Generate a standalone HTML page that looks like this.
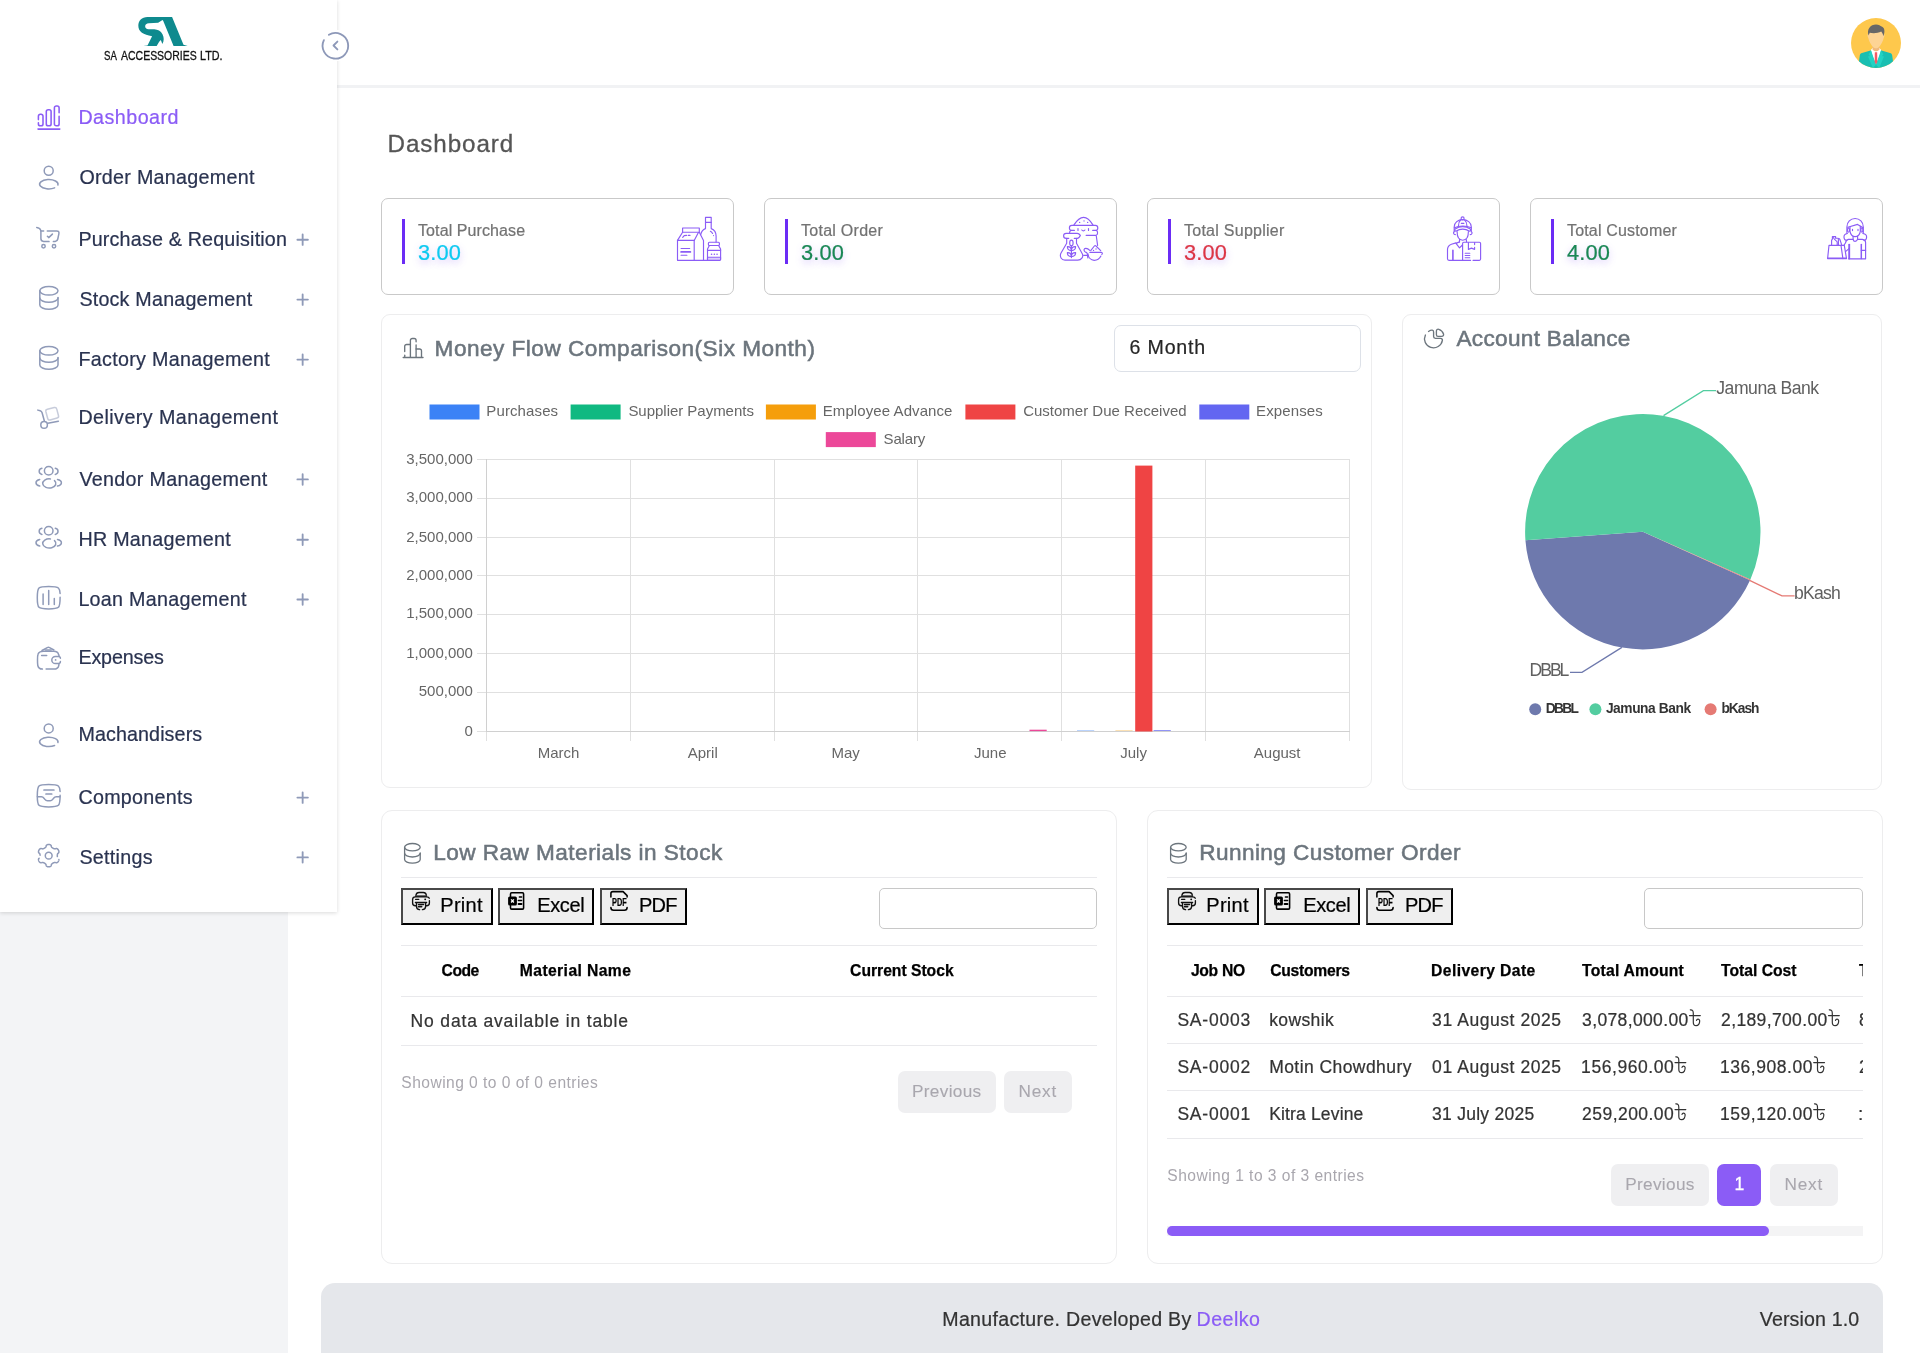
<!DOCTYPE html>
<html><head><meta charset="utf-8"><title>Dashboard</title><style>
*{box-sizing:border-box}
html,body{margin:0;padding:0}
html{width:1920px;height:1353px;overflow:hidden}
body{width:1920px;height:1353px;overflow:hidden;background:#f3f4f6;font-family:"Liberation Sans",sans-serif;position:relative}
#w{position:absolute;left:0;top:0;width:1920px;height:1353px;will-change:transform;overflow:hidden}
.abs{position:absolute}
.t{position:absolute;white-space:pre;line-height:1;display:block}
.n{-webkit-text-stroke-width:.22px}
#main{position:absolute;left:288px;top:0;width:1632px;height:1353px;background:#fff}
#sidebar{position:absolute;left:0;top:0;width:337px;height:912px;background:#fff;box-shadow:0 1px 4px rgba(0,0,0,.15)}
#toggle{position:absolute;left:320px;top:30px;width:31px;height:31px;background:#fff}
#hdr{position:absolute;left:337px;top:0;width:1583px;height:88px;background:#fff;border-bottom:3px solid #f1f2f4}
.stat{position:absolute;top:198px;width:353px;height:96.5px;border:1px solid #c9c9c9;border-radius:7px;background:#fff}
.bar{position:absolute;top:219px;width:3.4px;height:45px;background:#6b2cf5}
.card{position:absolute;background:#fff;border:1px solid #ededee;border-radius:9px}
.hl{position:absolute;height:1px;background:#e9e9ec}
.btn{position:absolute;top:888.3px;height:36.5px;background:#efefef;border:2px solid;border-color:#484848 #000 #000 #484848}
.inp{position:absolute;top:888.3px;height:40.3px;border:1px solid #c8c8c8;border-radius:5px;background:#fff}
.pg{position:absolute;height:41.5px;background:#efeff1;border-radius:7px}
#foot{position:absolute;left:321px;top:1283px;width:1561.5px;height:70px;background:#e5e7eb;border-radius:14px 14px 0 0}
</style></head>
<body>
<div id="w">
<div id="main"></div>

<div id="hdr"></div>
<svg class="abs" style="left:1851px;top:17.8px" width="50" height="50" viewBox="0 0 50 50"><defs><clipPath id="avc"><circle cx="25" cy="25" r="25"/></clipPath></defs>
<circle cx="25" cy="25" r="25" fill="#fec84c"/>
<g clip-path="url(#avc)">
<path d="M7.6,46 L8.8,37.5 C9,36.2 9.8,35.4 11,35.1 L20.4,32.3 L29.6,32.3 L39,35.1 C40.2,35.4 41,36.2 41.2,37.5 L42.4,46 L42,52 L8,52 Z" fill="#19bfb2"/>
<path d="M19.8,32 L22.2,29.6 L27.8,29.6 L30.2,32 L28.6,38 L25,46.5 L21.4,38 Z" fill="#fff"/>
<path d="M21.6,28 H28.4 V31.2 C27.6,32.6 26.4,33.2 25,33.2 C23.6,33.2 22.4,32.6 21.6,31.2 Z" fill="#f0b97d"/>
<path d="M20,32.2 L25,46.8 L21.8,50 L17,38.6 L19,38 L17.6,36.4 Z" fill="#22d2c3"/>
<path d="M30,32.2 L25,46.8 L28.2,50 L33,38.6 L31,38 L32.4,36.4 Z" fill="#22d2c3"/>
<path d="M23.8,34.2 H26.2 L26.3,44 L25,46.4 L23.7,44 Z" fill="#f55a64"/>
<path d="M16.9,16 C16.4,16.4 16.4,18.6 17.3,20 C17.9,23 20.2,27 22,29 C23.6,30.8 26.4,30.8 28,29 C29.8,27 32.1,23 32.7,20 C33.6,18.6 33.6,16.4 33.1,16 L31,12 L19,12 Z" fill="#fdd495"/>
<path d="M17.6,17.6 C15.4,11 19.6,6.4 25,6.4 C28,6.4 29.4,7.6 30.6,8.6 C33.4,9.4 34.4,13.4 32.4,18.2 C32,16.6 31.2,14.6 30.2,13.6 C26.6,15.6 21.6,15.6 18.8,14.8 C18.4,15.6 18,16.6 17.6,17.6 Z" fill="#676767"/>
</g></svg>
<span class="t n" style="left:387.60px;top:132.01px;font-size:24.2px;color:#555;letter-spacing:0.903px;-webkit-text-stroke:.3px #555;">Dashboard</span>

<div class="stat" style="left:381px"></div>
<div class="bar" style="left:401.6px"></div>
<span class="t n" style="left:418.00px;top:223.01px;font-size:16px;color:#737373;letter-spacing:0.097px;">Total Purchase</span>
<span class="t n" style="left:418.00px;top:242.00px;font-size:21.8px;color:#0dcaf0;letter-spacing:0.166px;text-shadow:0 3px 7px rgba(139,92,246,.42);">3.00</span>
<svg class="abs" style="left:670px;top:210px" width="60" height="60" viewBox="0 0 60 60" fill="none" stroke="#8b5cf6" stroke-width="1.15" stroke-linecap="round" stroke-linejoin="round"><rect x="12.6" y="18" width="16.7" height="4.2"/>
<path d="M12.6,22.3L7.5,30.4V50.3H50L50.6,49.6V39L48.6,35.5"/><path d="M7.5,30.4H24.2L28.4,22.6"/><path d="M24.2,30.4V50.3"/>
<path d="M29.3,22.3L33.5,30.6V50.3"/>
<path d="M11.1,38.5H19.7M11.1,45.2H16.9"/><path d="M11.1,41.9H20.4" stroke-width="1.7"/>
<path d="M12.7,27.4L14.2,25.6L16.6,25.4M18.3,25.4H20"/>
<rect x="35.5" y="7.3" width="5.7" height="5.1"/><path d="M35.5,12.4V18.6C32.8,19.6 31.2,22 30.7,24.6"/><path d="M41.2,12.4V18.6C44.4,19.8 46.1,22.6 46.1,26V32"/>
<path d="M40.4,21.3C41.4,21.9 42.1,22.7 42.6,23.5M43.5,25.5V25.6"/>
<rect x="38.4" y="32.2" width="11" height="3.3" rx="1"/><path d="M39.4,35.5L37.5,39V50.3"/>
<path d="M37.5,40.4H50.6M37.5,47.2H50.6"/><path d="M37.9,48.8H50.2" stroke-width="2.4" opacity=".3"/>
<path d="M41.5,44.3h.1M44.3,44.3h.1M47,44.3h.1" stroke-width="1.5"/></svg><div class="stat" style="left:764px"></div>
<div class="bar" style="left:784.6px"></div>
<span class="t n" style="left:801.00px;top:223.01px;font-size:16px;color:#737373;letter-spacing:0.269px;">Total Order</span>
<span class="t n" style="left:801.00px;top:242.00px;font-size:21.8px;color:#198754;letter-spacing:0.166px;text-shadow:0 3px 7px rgba(139,92,246,.42);">3.00</span>
<svg class="abs" style="left:1053px;top:210px" width="60" height="60" viewBox="0 0 60 60" fill="none" stroke="#8b5cf6" stroke-width="1.15" stroke-linecap="round" stroke-linejoin="round"><path d="M20.8,15.1C24,10 27.6,7.3 30.6,7.3C33.8,7.3 37,10 39.9,14.9"/>
<path d="M26.6,12.4h.1M34.6,12.4h.1" stroke-width="1.3"/><path d="M31,10.9h.1" stroke-width="1.8" opacity=".5"/>
<path d="M21.4,20.4H18.8C17.2,20.4 16.4,19.4 16.4,17.9C16.4,16.3 17.2,15.3 18.8,15.3H42.4C44,15.3 44.8,16.3 44.8,17.9C44.8,19.4 44,20.4 42.4,20.4H39.7"/>
<path d="M17.6,20.6C16.6,21.4 16.5,22.4 16.6,23.1"/><path d="M43.4,20.6C45,21.4 45,24.6 43.2,25.3H33.1"/>
<path d="M25,18.6V20.4M35.5,18.6V20.4"/><path d="M28.8,20C29.6,21.1 31.1,21.1 31.9,20"/>
<path d="M43.3,26L44.6,35.4"/>
<path d="M15.7,28.4H13.2C11.6,28.4 10.6,27.3 10.6,25.8C10.6,24.3 11.6,23.3 13.2,23.3H24.2C25.4,23.3 26.4,24 27.4,25.3C26.6,27.3 25.6,28.4 24.2,28.4H21.3"/>
<path d="M13.7,28.4V33.3L7.9,43.3C6.4,46.6 8.4,50.1 12,50.1H24.8C28.4,50.1 30.6,46.8 29.4,44L23.5,33.3V28.4"/>
<ellipse cx="18.4" cy="33" rx="1.7" ry="2.9"/><path d="M18.4,36V47.6"/>
<path d="M18.4,40.6C15.4,40.6 14.2,38.8 14.4,36.6C16.8,36.4 18.4,37.8 18.4,40.6C18.4,37.8 20,36.4 22.6,36.6C22.8,38.8 21.4,40.6 18.4,40.6"/>
<path d="M18.4,46.6C15.4,46.6 14.2,44.8 14.4,42.6C16.8,42.4 18.4,43.8 18.4,46.6C18.4,43.8 20,42.4 22.6,42.6C22.8,44.8 21.4,46.6 18.4,46.6"/>
<path d="M36.8,42.3H48.3C49.6,42.6 49.6,43.8 48.8,44.4"/><path d="M35,43.9C35.4,47.4 37.8,50.3 41.2,50.3C44.2,50.3 46.6,48.6 47.9,46"/>
<path d="M37.7,40.6L41.4,36C41.9,35.4 42.5,35.4 43,36L47.7,40.6"/><path d="M43,39h.1" stroke-width="1.8" opacity=".5"/><path d="M40.5,40.4h.1" stroke-width="1.2"/>
<path d="M34.9,48C34.4,46 34.6,44.6 34.2,43.4C33.8,42.4 32.6,42.2 31.8,41.6C30.6,40.6 30.8,38.6 32.6,38.4C34.2,38.2 35.6,39.2 36.8,40.4"/><path d="M30.6,45.3H34"/></svg><div class="stat" style="left:1147px"></div>
<div class="bar" style="left:1167.6px"></div>
<span class="t n" style="left:1184.00px;top:223.01px;font-size:16px;color:#737373;letter-spacing:0.260px;">Total Supplier</span>
<span class="t n" style="left:1184.00px;top:242.00px;font-size:21.8px;color:#dc3545;letter-spacing:0.166px;text-shadow:0 3px 7px rgba(139,92,246,.42);">3.00</span>
<svg class="abs" style="left:1436px;top:210px" width="60" height="60" viewBox="0 0 60 60" fill="none" stroke="#8b5cf6" stroke-width="1.15" stroke-linecap="round" stroke-linejoin="round"><circle cx="26.6" cy="8.3" r="1.5"/>
<path d="M18.2,21.5V17C18.2,12.6 22,9.6 26.6,9.6C31.3,9.6 35.3,12.6 35.3,17V21.5"/>
<path d="M24.6,9.9C23,11.6 22.4,14 22.4,16.2M28.6,9.9C30.4,11.6 31,14 31,16.2"/>
<path d="M18.4,17.8C23,15.4 30.4,15.4 35.2,17.8"/><path d="M25.3,13.3H27.9"/>
<path d="M19.2,18.9C23.6,15.9 29.8,15.9 34.2,18.9C35,19.6 34.6,20.9 33.6,21.2C29.4,18.6 24,18.6 19.8,21.2C18.8,20.9 18.4,19.6 19.2,18.9Z"/>
<path d="M18.4,21.8C17,22 17.4,24.6 19.4,24.6M35.2,21.8C36.6,22 36.2,24.6 34.2,24.6"/>
<path d="M21.1,21.6C21.1,27 23.2,30.2 26.7,30.2C30.4,30.2 32.4,27 32.4,21.6"/>
<path d="M23.5,29.4V31.9M30.2,29.4L30.6,31.9"/>
<path d="M23.5,31.9L20,33.4L23.5,37.9L26.4,35"/>
<path d="M20,32.9L15.4,34.2C12.8,35.2 11.5,37 11.5,39.6V48.8C11.5,49.8 12,50.3 13,50.3H34.6"/>
<path d="M16.9,40.4V50.1" stroke-width="1.6"/>
<path d="M37,50.3H43.4C44.2,50.3 44.6,49.9 44.6,49.1V33.4C44.6,32.6 44.2,32.2 43.4,32.2H27.8C27,32.2 26.6,32.6 26.6,33.4V50.3"/>
<path d="M32.4,32.6V39.4L35.5,38.1L38.6,39.4V37.3M38.6,32.6V34.6"/>
<path d="M29.2,43.2H33.8M29.2,45.5H33.8M29.2,47.7H33.8"/></svg><div class="stat" style="left:1530px"></div>
<div class="bar" style="left:1550.6px"></div>
<span class="t n" style="left:1567.00px;top:223.01px;font-size:16px;color:#737373;letter-spacing:0.172px;">Total Customer</span>
<span class="t n" style="left:1567.00px;top:242.00px;font-size:21.8px;color:#198754;letter-spacing:0.166px;text-shadow:0 3px 7px rgba(139,92,246,.42);">4.00</span>
<svg class="abs" style="left:1819px;top:210px" width="60" height="60" viewBox="0 0 60 60" fill="none" stroke="#8b5cf6" stroke-width="1.15" stroke-linecap="round" stroke-linejoin="round"><path d="M27.9,23.2V16.9C27.9,12.2 31.5,8.5 36.1,8.5C40.7,8.5 44.3,12.2 44.3,16.9V23.2"/>
<path d="M28.8,17.3L38.6,14.4L44.1,17.7"/>
<ellipse cx="29.5" cy="20" rx="1" ry="2.2"/><ellipse cx="42.9" cy="20" rx="1" ry="2.2"/>
<path d="M31,17V21.3C31.6,24.6 33.6,26.6 36.1,26.6C38.6,26.6 40.8,24.6 41.3,21.3V16.4"/>
<path d="M33.5,19.4V20.6M39,19.4V20.6"/>
<path d="M28.4,23.5C25.8,23.9 24.8,25.4 25,27.4C25.2,29.6 26.4,30.4 27.8,30.2"/>
<path d="M43.9,23.5C46.6,23.9 47.8,25.4 47.6,27.4C47.4,29.6 46.2,30.4 44.8,30.2"/>
<path d="M34.1,26.4V29.3C34.4,30.8 35.2,31.4 36.1,31.4C37.2,31.4 38,30.8 38.6,29.3V26.4"/>
<path d="M34.1,29.4H29.4C27.6,29.8 26.8,31.4 26.4,33L24.9,35.4"/><path d="M38.6,29.4H43.4C45.4,29.6 46.6,30.8 46.6,32.6V48.8H29.6"/>
<path d="M30.2,34.6V48.6" stroke-width="1.9"/><path d="M42.3,34.6V48.6" stroke-width="1.5"/><path d="M42.3,40.4H46.6"/>
<path d="M26.8,41.4L30,38.6"/>
<path d="M10,35.3H22L23.9,48.6H8.6Z"/><path d="M22,35.3H25.3L27.5,48.6H23.9"/><path d="M8.8,48.3H27.3" stroke-width="1.6"/>
<path d="M12.6,35V30.4L13.4,29V26.6H16.6V28"/><path d="M14.4,27.6C15.4,30 17.4,30.4 18.2,32V35"/><path d="M16.6,28C18,28.6 20,27.6 20.8,29.2L22.6,34.6"/><path d="M19.4,29.4V35"/></svg>

<div class="card" style="left:381px;top:314px;width:991px;height:474px"></div>
<div class="card" style="left:1402px;top:314px;width:480px;height:476px"></div>
<div class="abs" style="left:1114px;top:325px;width:246.5px;height:46.5px;border:1px solid #dde1e8;border-radius:7px;background:#fff"></div>
<svg class="abs" style="left:0;top:0" width="1920" height="800" viewBox="0 0 1920 800">
<g stroke="#e0e0e0" stroke-width="1" fill="none"><path d="M486.50,459V741"/><path d="M630.50,459V741"/><path d="M774.50,459V741"/><path d="M917.50,459V741"/><path d="M1061.50,459V741"/><path d="M1205.50,459V741"/><path d="M1349.50,459V741"/><path d="M477,459.50H1350"/><path d="M477,498.50H1350"/><path d="M477,537.50H1350"/><path d="M477,575.50H1350"/><path d="M477,614.50H1350"/><path d="M477,653.50H1350"/><path d="M477,692.50H1350"/><path d="M477,731.50H1350"/></g>
<path d="M486.5,459V731.5H1350" stroke="rgba(0,0,0,.07)" stroke-width="1" fill="none"/>
<rect x="429.5" y="404.5" width="50" height="15" fill="#3b82f6"/><rect x="570.6" y="404.5" width="50" height="15" fill="#10b981"/><rect x="765.9" y="404.5" width="50" height="15" fill="#f59e0b"/><rect x="965.4" y="404.5" width="50" height="15" fill="#ef4444"/><rect x="1199.3" y="404.5" width="50" height="15" fill="#6366f1"/><rect x="825.8" y="432.1" width="50" height="15" fill="#ec4899"/><rect x="1135.2" y="465.6" width="17.2" height="265.9" fill="#ef4444"/>
<rect x="1029.5" y="729.7" width="17.2" height="1.4" fill="#ec4899"/>
<rect x="1077" y="730.3" width="17.2" height=".7" fill="#3b82f6" opacity=".5"/>
<rect x="1115.4" y="730.4" width="17.2" height=".6" fill="#f59e0b" opacity=".5"/>
<rect x="1153.6" y="730" width="17.2" height="1" fill="#6366f1" opacity=".7"/><g fill="none" stroke="#6c757d" stroke-width="1.35" stroke-linecap="round" stroke-linejoin="round">
<path d="M403.2,357.5H423"/>
<path d="M404.7,351.6V346.4a1.9,1.9 0 0 1 1.9,-1.9H410.4"/><path d="M404.7,355.2V357.3"/>
<path d="M410.4,357.3V340.4a1.9,1.9 0 0 1 1.9,-1.9h1.9a1.9,1.9 0 0 1 1.9,1.9V341.7"/><path d="M416.1,344.9V357.3"/>
<path d="M416.1,349H419.6a1.9,1.9 0 0 1 1.9,1.9V357.3"/></g><g fill="none" stroke="#6c757d" stroke-width="1.35" stroke-linecap="round" stroke-linejoin="round">
<path d="M1428.5,331.5C1430,330.5 1431.2,330.1 1432.2,330.2C1433.2,330.4 1433.6,331 1433.6,332V336.6C1433.6,337.8 1434.2,338.4 1435.4,338.4H1440.6C1441.8,338.4 1442.6,339.2 1442.4,340.4A9,9 0 1 1 1425.4,335"/>
<path d="M1436.4,331.2C1436.4,329.6 1437.4,328.9 1438.8,329.3C1441,330 1442.8,331.8 1443.5,334C1443.9,335.4 1443.2,336.3 1441.7,336.3H1438C1436.9,336.3 1436.4,335.8 1436.4,334.7Z"/></g><path d="M1642.8,531.7L1750.03,580.23A117.7,117.7 0 0 1 1525.42,540.32Z" fill="#6e79ad"/><path d="M1642.8,531.7L1525.42,540.32A117.7,117.7 0 1 1 1750.41,579.39Z" fill="#53cda0"/><path d="M1642.8,531.7L1750.41,579.39A117.7,117.7 0 0 1 1750.03,580.23Z" fill="#e57a74"/><g fill="none" stroke-width="1.25">
<path d="M1663.5,415.6L1703.4,390.6H1716" stroke="#53cda0"/>
<path d="M1749.6,580.4L1782,595.9H1794.6" stroke="#e57a74"/>
<path d="M1621.9,647.4L1582,672.4H1570" stroke="#6e79ad"/></g>
<circle cx="1535.2" cy="709.3" r="6" fill="#6e79ad"/><circle cx="1595.4" cy="709.3" r="6" fill="#53cda0"/><circle cx="1710.6" cy="709.3" r="6" fill="#e57a74"/>
</svg>
<span class="t n" style="left:434.60px;top:338.00px;font-size:22.6px;color:#6c757d;letter-spacing:0.482px;-webkit-text-stroke:.55px #6c757d;">Money Flow Comparison(Six Month)</span>
<span class="t n" style="left:1129.60px;top:338.00px;font-size:19.6px;color:#262626;letter-spacing:0.800px;">6 Month</span>
<span class="t n" style="left:1456.40px;top:328.01px;font-size:22.6px;color:#6c757d;letter-spacing:0.314px;-webkit-text-stroke:.55px #6c757d;">Account Balance</span>
<span class="t" style="left:486.30px;top:403.01px;font-size:15px;color:#666;letter-spacing:0.116px;">Purchases</span><span class="t" style="left:628.40px;top:403.01px;font-size:15px;color:#666;letter-spacing:-0.025px;">Supplier Payments</span><span class="t" style="left:822.75px;top:403.01px;font-size:15px;color:#666;letter-spacing:0.083px;">Employee Advance</span><span class="t" style="left:1023.20px;top:403.01px;font-size:15px;color:#666;">Customer Due Received</span><span class="t" style="left:1256.10px;top:403.01px;font-size:15px;color:#666;letter-spacing:0.104px;">Expenses</span><span class="t" style="left:883.60px;top:431.00px;font-size:15px;color:#666;letter-spacing:-0.163px;">Salary</span><span class="t" style="left:406.21px;top:451.00px;font-size:15px;color:#666;">3,500,000</span><span class="t" style="left:406.21px;top:489.00px;font-size:15px;color:#666;">3,000,000</span><span class="t" style="left:406.21px;top:529.00px;font-size:15px;color:#666;">2,500,000</span><span class="t" style="left:406.21px;top:567.00px;font-size:15px;color:#666;">2,000,000</span><span class="t" style="left:406.21px;top:605.00px;font-size:15px;color:#666;">1,500,000</span><span class="t" style="left:406.21px;top:645.00px;font-size:15px;color:#666;">1,000,000</span><span class="t" style="left:418.72px;top:683.00px;font-size:15px;color:#666;">500,000</span><span class="t" style="left:464.60px;top:723.00px;font-size:15px;color:#666;">0</span><span class="t" style="left:537.68px;top:745.00px;font-size:15px;color:#666;">March</span><span class="t" style="left:687.76px;top:745.00px;font-size:15px;color:#666;">April</span><span class="t" style="left:831.43px;top:745.00px;font-size:15px;color:#666;">May</span><span class="t" style="left:974.01px;top:745.00px;font-size:15px;color:#666;">June</span><span class="t" style="left:1120.26px;top:745.00px;font-size:15px;color:#666;">July</span><span class="t" style="left:1253.83px;top:745.00px;font-size:15px;color:#666;">August</span>
<span class="t" style="left:1716.30px;top:380.01px;font-size:17.6px;color:#606060;letter-spacing:-0.478px;">Jamuna Bank</span>
<span class="t" style="left:1794.00px;top:585.00px;font-size:17.6px;color:#606060;letter-spacing:-0.800px;">bKash</span>
<span class="t" style="left:1529.50px;top:662.01px;font-size:17.6px;color:#606060;letter-spacing:-2.025px;">DBBL</span>
<span class="t" style="left:1545.80px;top:702.00px;font-size:13.75px;color:#333;font-weight:700;letter-spacing:-1.730px;">DBBL</span>
<span class="t" style="left:1605.90px;top:702.00px;font-size:13.75px;color:#333;font-weight:700;letter-spacing:-0.426px;">Jamuna Bank</span>
<span class="t" style="left:1721.40px;top:702.00px;font-size:13.75px;color:#333;font-weight:700;letter-spacing:-0.981px;">bKash</span>


<div class="card" style="left:381px;top:810px;width:736px;height:454px;border-radius:11px"></div>
<div class="hl" style="left:401.3px;top:877px;width:695.5px"></div>
<div class="hl" style="left:401.3px;top:944.7px;width:695.5px"></div>
<div class="hl" style="left:401.3px;top:995.8px;width:695.5px"></div>
<div class="btn" style="left:401.3px;width:91.5px"></div>
<div class="btn" style="left:498.4px;width:95.3px"></div>
<div class="btn" style="left:600.4px;width:86.3px"></div>
<div class="inp" style="left:879px;width:218px"></div>
<span class="t n" style="left:433.20px;top:842.01px;font-size:22.6px;color:#6c757d;letter-spacing:0.460px;-webkit-text-stroke:.55px #6c757d;">Low Raw Materials in Stock</span>
<span class="t n" style="left:440.30px;top:895.01px;font-size:20px;color:#000;letter-spacing:0.258px;">Print</span>
<span class="t n" style="left:537.20px;top:895.01px;font-size:20px;color:#000;letter-spacing:-0.341px;">Excel</span>
<span class="t n" style="left:639.00px;top:895.01px;font-size:20px;color:#000;letter-spacing:-0.742px;">PDF</span>
<span class="t n" style="left:611.60px;top:898.01px;font-size:10.2px;color:#000;font-weight:700;transform:scaleX(0.7195);transform-origin:0 0;">PDF</span>

<div class="card" style="left:1147px;top:810px;width:736px;height:454px;border-radius:11px"></div>
<div class="hl" style="left:1167.3px;top:877px;width:695.5px"></div>
<div class="hl" style="left:1167.3px;top:944.7px;width:695.5px"></div>
<div class="hl" style="left:1167.3px;top:995.8px;width:695.5px"></div>
<div class="btn" style="left:1167.3px;width:91.5px"></div>
<div class="btn" style="left:1264.3999999999999px;width:95.3px"></div>
<div class="btn" style="left:1366.3999999999999px;width:86.3px"></div>
<div class="inp" style="left:1644.3px;width:218.5px"></div>
<span class="t n" style="left:1199.20px;top:842.01px;font-size:22.6px;color:#6c757d;letter-spacing:0.420px;-webkit-text-stroke:.55px #6c757d;">Running Customer Order</span>
<span class="t n" style="left:1206.30px;top:895.01px;font-size:20px;color:#000;letter-spacing:0.258px;">Print</span>
<span class="t n" style="left:1303.20px;top:895.01px;font-size:20px;color:#000;letter-spacing:-0.341px;">Excel</span>
<span class="t n" style="left:1405.00px;top:895.01px;font-size:20px;color:#000;letter-spacing:-0.742px;">PDF</span>
<span class="t n" style="left:1377.60px;top:898.01px;font-size:10.2px;color:#000;font-weight:700;transform:scaleX(0.7195);transform-origin:0 0;">PDF</span>

<div class="hl" style="left:401.3px;top:1045px;width:695.5px"></div>
<div class="hl" style="left:1167.3px;top:1043.3px;width:695.5px"></div>
<div class="hl" style="left:1167.3px;top:1090.4px;width:695.5px"></div>
<div class="hl" style="left:1167.3px;top:1138px;width:695.5px"></div>
<div class="pg" style="left:898px;top:1071.2px;width:97.8px"></div>
<div class="pg" style="left:1004.2px;top:1071.2px;width:67.6px"></div>
<div class="pg" style="left:1611.2px;top:1164.2px;width:97.4px"></div>
<div class="pg" style="left:1717.4px;top:1164.2px;width:43.4px;background:#8b5cf6"></div>
<div class="pg" style="left:1770.2px;top:1164.2px;width:67.6px"></div>
<div class="abs" style="left:1167.3px;top:1226.4px;width:695.4px;height:9.4px;background:#f4f4f5"></div>
<div class="abs" style="left:1167.3px;top:1226.4px;width:601.4px;height:9.4px;background:#8b5cf6;border-radius:5px"></div>
<svg class="abs" style="left:0;top:800px" width="1920" height="553" viewBox="0 800 1920 553">
<g transform="translate(403.2,842.8)" fill="none" stroke="#6c757d" stroke-width="1.3" stroke-linecap="round" stroke-linejoin="round">
<ellipse cx="9.2" cy="4.4" rx="7.8" ry="3.7"/><path d="M1.4,4.4V16.6C1.4,18.7 4.9,20.3 9.2,20.3C13.5,20.3 17,18.7 17,16.6V10.2"/><path d="M1.4,10.5C1.4,12.6 4.9,14.2 9.2,14.2C13.5,14.2 17,12.6 17,10.5"/></g><g transform="translate(1169.2,842.8)" fill="none" stroke="#6c757d" stroke-width="1.3" stroke-linecap="round" stroke-linejoin="round">
<ellipse cx="9.2" cy="4.4" rx="7.8" ry="3.7"/><path d="M1.4,4.4V16.6C1.4,18.7 4.9,20.3 9.2,20.3C13.5,20.3 17,18.7 17,16.6V10.2"/><path d="M1.4,10.5C1.4,12.6 4.9,14.2 9.2,14.2C13.5,14.2 17,12.6 17,10.5"/></g>
<g transform="translate(404.00,886)" fill="none" stroke="#111" stroke-width="1.35" stroke-linecap="round" stroke-linejoin="round">
<path d="M11.9,10.3C11.9,7.7 13,6.5 15.2,6.5H19.2C21.4,6.5 22.3,7.7 22.4,10"/>
<path d="M11.9,10.1H22.4" stroke-width="1.7" stroke="#444"/>
<path d="M12.2,19.7H11.4C9.5,19.7 8.6,18.8 8.6,16.9V13.6C8.6,11.7 9.5,10.8 11.4,10.8H22.6C24.2,10.8 25,11.3 25.3,12.2"/>
<path d="M25.4,14.6V16.9C25.4,18.8 24.5,19.7 22.6,19.7H21.8"/>
<path d="M11.4,16.5H22.6"/>
<path d="M12.5,16.9V20.6C12.5,22.6 13.5,23.6 15.6,23.7M18.4,23.6C20.6,23.5 21.6,22.6 21.6,20.6V16.9"/>
<path d="M14.5,18.5H19.6"/><path d="M14.6,20.6H17.6" stroke-width="1.7"/>
<path d="M11.6,13.3H14.8"/><path d="M21.1,13.3H21.3" stroke-width="1.7"/>
</g><g transform="translate(500.00,886)" fill="none" stroke="#000" stroke-width="1.55" stroke-linecap="round" stroke-linejoin="round">
<path d="M10.5,10.4V7.9C10.5,7.2 10.9,6.8 11.6,6.8H22.5C23.2,6.8 23.6,7.2 23.6,7.9V22C23.6,22.7 23.2,23.1 22.5,23.1H11.6C10.9,23.1 10.5,22.7 10.5,22V19.5"/>
<rect x="8.1" y="10.4" width="8.8" height="9.1" rx="1.6" fill="#000" stroke="none"/>
<path d="M11.1,13.4L13.9,16.5M13.9,13.4L11.1,16.5" stroke="#fff" stroke-width="1.35" stroke-linecap="butt"/>
<path d="M19.4,11.1H21.6M18.4,14.5H21.6" stroke-width="1.5"/><path d="M18.6,18H21.5" stroke-width="1.9"/>
</g><g transform="translate(600.00,886)" fill="none" stroke="#000" stroke-width="1.55" stroke-linecap="round" stroke-linejoin="round">
<path d="M10.9,11V7.6C10.9,6.2 11.6,5.6 12.9,5.6H23.1L27.1,9.6V11"/>
<path d="M10.9,21.4C10.9,23.3 11.8,24.2 13.6,24.2H24.4C26.2,24.2 27.1,23.3 27.1,21.4"/>
</g><g transform="translate(1170.00,886)" fill="none" stroke="#111" stroke-width="1.35" stroke-linecap="round" stroke-linejoin="round">
<path d="M11.9,10.3C11.9,7.7 13,6.5 15.2,6.5H19.2C21.4,6.5 22.3,7.7 22.4,10"/>
<path d="M11.9,10.1H22.4" stroke-width="1.7" stroke="#444"/>
<path d="M12.2,19.7H11.4C9.5,19.7 8.6,18.8 8.6,16.9V13.6C8.6,11.7 9.5,10.8 11.4,10.8H22.6C24.2,10.8 25,11.3 25.3,12.2"/>
<path d="M25.4,14.6V16.9C25.4,18.8 24.5,19.7 22.6,19.7H21.8"/>
<path d="M11.4,16.5H22.6"/>
<path d="M12.5,16.9V20.6C12.5,22.6 13.5,23.6 15.6,23.7M18.4,23.6C20.6,23.5 21.6,22.6 21.6,20.6V16.9"/>
<path d="M14.5,18.5H19.6"/><path d="M14.6,20.6H17.6" stroke-width="1.7"/>
<path d="M11.6,13.3H14.8"/><path d="M21.1,13.3H21.3" stroke-width="1.7"/>
</g><g transform="translate(1266.00,886)" fill="none" stroke="#000" stroke-width="1.55" stroke-linecap="round" stroke-linejoin="round">
<path d="M10.5,10.4V7.9C10.5,7.2 10.9,6.8 11.6,6.8H22.5C23.2,6.8 23.6,7.2 23.6,7.9V22C23.6,22.7 23.2,23.1 22.5,23.1H11.6C10.9,23.1 10.5,22.7 10.5,22V19.5"/>
<rect x="8.1" y="10.4" width="8.8" height="9.1" rx="1.6" fill="#000" stroke="none"/>
<path d="M11.1,13.4L13.9,16.5M13.9,13.4L11.1,16.5" stroke="#fff" stroke-width="1.35" stroke-linecap="butt"/>
<path d="M19.4,11.1H21.6M18.4,14.5H21.6" stroke-width="1.5"/><path d="M18.6,18H21.5" stroke-width="1.9"/>
</g><g transform="translate(1366.00,886)" fill="none" stroke="#000" stroke-width="1.55" stroke-linecap="round" stroke-linejoin="round">
<path d="M10.9,11V7.6C10.9,6.2 11.6,5.6 12.9,5.6H23.1L27.1,9.6V11"/>
<path d="M10.9,21.4C10.9,23.3 11.8,24.2 13.6,24.2H24.4C26.2,24.2 27.1,23.3 27.1,21.4"/>
</g>
<path d="M1690.3,1009.8C1692.7,1009.6 1693.3,1011.4 1693.3,1013.4V1022.2C1693.3,1024.8 1694.5,1025.7 1696.1,1025.7C1698.5,1025.7 1699.8999999999999,1023.2 1699.6,1020.4C1699.1,1018.6 1696.8999999999999,1018.8 1696.5,1020.4M1689.5,1015.6H1700.3" fill="none" stroke="#333" stroke-width="1.2" stroke-linecap="round" stroke-linejoin="round"/><path d="M1829.3,1009.8C1831.7,1009.6 1832.3,1011.4 1832.3,1013.4V1022.2C1832.3,1024.8 1833.5,1025.7 1835.1,1025.7C1837.5,1025.7 1838.8999999999999,1023.2 1838.6,1020.4C1838.1,1018.6 1835.8999999999999,1018.8 1835.5,1020.4M1828.5,1015.6H1839.3" fill="none" stroke="#333" stroke-width="1.2" stroke-linecap="round" stroke-linejoin="round"/><path d="M1675.8,1056.8C1678.2,1056.6 1678.8,1058.4 1678.8,1060.4V1069.2C1678.8,1071.8 1680.0,1072.7 1681.6,1072.7C1684.0,1072.7 1685.3999999999999,1070.2 1685.1,1067.4C1684.6,1065.6 1682.3999999999999,1065.8 1682.0,1067.4M1675.0,1062.6H1685.8" fill="none" stroke="#333" stroke-width="1.2" stroke-linecap="round" stroke-linejoin="round"/><path d="M1814.5,1056.8C1816.9,1056.6 1817.5,1058.4 1817.5,1060.4V1069.2C1817.5,1071.8 1818.7,1072.7 1820.3,1072.7C1822.7,1072.7 1824.1,1070.2 1823.8,1067.4C1823.3,1065.6 1821.1,1065.8 1820.7,1067.4M1813.7,1062.6H1824.5" fill="none" stroke="#333" stroke-width="1.2" stroke-linecap="round" stroke-linejoin="round"/><path d="M1675.8,1103.8C1678.2,1103.6 1678.8,1105.4 1678.8,1107.4V1116.2C1678.8,1118.8 1680.0,1119.7 1681.6,1119.7C1684.0,1119.7 1685.3999999999999,1117.2 1685.1,1114.4C1684.6,1112.6 1682.3999999999999,1112.8 1682.0,1114.4M1675.0,1109.6H1685.8" fill="none" stroke="#333" stroke-width="1.2" stroke-linecap="round" stroke-linejoin="round"/><path d="M1814.5,1103.8C1816.9,1103.6 1817.5,1105.4 1817.5,1107.4V1116.2C1817.5,1118.8 1818.7,1119.7 1820.3,1119.7C1822.7,1119.7 1824.1,1117.2 1823.8,1114.4C1823.3,1112.6 1821.1,1112.8 1820.7,1114.4M1813.7,1109.6H1824.5" fill="none" stroke="#333" stroke-width="1.2" stroke-linecap="round" stroke-linejoin="round"/>
</svg>
<span class="t n" style="left:441.60px;top:963.01px;font-size:15.7px;color:#000;font-weight:700;letter-spacing:-0.498px;-webkit-text-stroke:.25px #000;">Code</span>
<span class="t n" style="left:519.80px;top:963.01px;font-size:15.7px;color:#000;font-weight:700;letter-spacing:0.396px;-webkit-text-stroke:.25px #000;">Material Name</span>
<span class="t n" style="left:850.10px;top:963.01px;font-size:15.7px;color:#000;font-weight:700;letter-spacing:-0.017px;-webkit-text-stroke:.25px #000;">Current Stock</span>
<span class="t n" style="left:410.60px;top:1013.00px;font-size:17.5px;color:#333;letter-spacing:0.836px;">No data available in table</span>
<span class="t n" style="left:401.30px;top:1075.01px;font-size:15.6px;color:#a9a7ae;letter-spacing:0.456px;-webkit-text-stroke-width:0;">Showing 0 to 0 of 0 entries</span>
<span class="t n" style="left:912.00px;top:1083.00px;font-size:17.2px;color:#a9a7ae;letter-spacing:0.332px;-webkit-text-stroke-width:.1px;">Previous</span>
<span class="t n" style="left:1018.60px;top:1083.00px;font-size:17.2px;color:#a9a7ae;letter-spacing:0.745px;-webkit-text-stroke-width:.1px;">Next</span>
<span class="t n" style="left:1190.90px;top:963.01px;font-size:15.7px;color:#000;font-weight:700;letter-spacing:-0.315px;-webkit-text-stroke:.25px #000;">Job NO</span>
<span class="t n" style="left:1270.20px;top:963.01px;font-size:15.7px;color:#000;font-weight:700;letter-spacing:-0.265px;-webkit-text-stroke:.25px #000;">Customers</span>
<span class="t n" style="left:1431.10px;top:963.01px;font-size:15.7px;color:#000;font-weight:700;letter-spacing:0.393px;-webkit-text-stroke:.25px #000;">Delivery Date</span>
<span class="t n" style="left:1582.10px;top:963.01px;font-size:15.7px;color:#000;font-weight:700;letter-spacing:0.210px;-webkit-text-stroke:.25px #000;">Total Amount</span>
<span class="t n" style="left:1721.10px;top:963.01px;font-size:15.7px;color:#000;font-weight:700;letter-spacing:-0.022px;-webkit-text-stroke:.25px #000;">Total Cost</span>
<div class="abs" style="left:1855px;top:960px;width:7.7px;height:24px;overflow:hidden"><span class="t" style="left:4px;top:2.6px;font-size:15.7px;font-weight:700;color:#000;-webkit-text-stroke:.25px #000">Total Profit</span></div>
<span class="t n" style="left:1177.40px;top:1012.00px;font-size:17.5px;color:#333;letter-spacing:0.772px;">SA-0003</span><span class="t n" style="left:1269.20px;top:1012.00px;font-size:17.5px;color:#333;letter-spacing:0.385px;">kowshik</span><span class="t n" style="left:1432.10px;top:1012.00px;font-size:17.5px;color:#333;letter-spacing:0.564px;">31 August 2025</span><span class="t n" style="left:1582.10px;top:1012.00px;font-size:17.5px;color:#333;letter-spacing:0.359px;">3,078,000.00</span><span class="t n" style="left:1721.10px;top:1012.00px;font-size:17.5px;color:#333;letter-spacing:0.359px;">2,189,700.00</span><span class="t n" style="left:1859.00px;top:1012.00px;font-size:17.5px;color:#333;">8</span><span class="t n" style="left:1177.40px;top:1059.00px;font-size:17.5px;color:#333;letter-spacing:0.772px;">SA-0002</span><span class="t n" style="left:1269.20px;top:1059.00px;font-size:17.5px;color:#333;letter-spacing:0.434px;">Motin Chowdhury</span><span class="t n" style="left:1432.10px;top:1059.00px;font-size:17.5px;color:#333;letter-spacing:0.564px;">01 August 2025</span><span class="t n" style="left:1581.10px;top:1059.00px;font-size:17.5px;color:#333;letter-spacing:0.561px;">156,960.00</span><span class="t n" style="left:1720.10px;top:1059.00px;font-size:17.5px;color:#333;letter-spacing:0.527px;">136,908.00</span><span class="t n" style="left:1859.00px;top:1059.00px;font-size:17.5px;color:#333;">2</span><span class="t n" style="left:1177.40px;top:1106.00px;font-size:17.5px;color:#333;letter-spacing:0.772px;">SA-0001</span><span class="t n" style="left:1269.20px;top:1106.00px;font-size:17.5px;color:#333;letter-spacing:0.156px;">Kitra Levine</span><span class="t n" style="left:1432.10px;top:1106.00px;font-size:17.5px;color:#333;letter-spacing:0.263px;">31 July 2025</span><span class="t n" style="left:1582.10px;top:1106.00px;font-size:17.5px;color:#333;letter-spacing:0.450px;">259,200.00</span><span class="t n" style="left:1720.10px;top:1106.00px;font-size:17.5px;color:#333;letter-spacing:0.527px;">159,120.00</span><span class="t n" style="left:1858.00px;top:1104.01px;font-size:19px;color:#333;">:</span>
<span class="t n" style="left:1167.30px;top:1168.01px;font-size:15.6px;color:#a9a7ae;letter-spacing:0.464px;-webkit-text-stroke-width:0;">Showing 1 to 3 of 3 entries</span>
<span class="t n" style="left:1625.20px;top:1176.00px;font-size:17.2px;color:#a9a7ae;letter-spacing:0.332px;-webkit-text-stroke-width:.1px;">Previous</span>
<span class="t n" style="left:1734.60px;top:1176.01px;font-size:17.6px;color:#fff;-webkit-text-stroke:.3px #fff;">1</span>
<span class="t n" style="left:1784.60px;top:1176.00px;font-size:17.2px;color:#a9a7ae;letter-spacing:0.745px;-webkit-text-stroke-width:.1px;">Next</span>
<div class="abs" style="left:1862.7px;top:950px;width:19px;height:200px;background:#fff"></div>

<div id="foot"></div>
<span class="t n" style="left:942.30px;top:1310.01px;font-size:19.6px;color:#333;letter-spacing:0.300px;">Manufacture. Developed By</span>
<span class="t n" style="left:1196.50px;top:1310.01px;font-size:19.6px;color:#8b5cf6;letter-spacing:0.481px;">Deelko</span>
<span class="t n" style="left:1759.80px;top:1310.01px;font-size:19.6px;color:#333;letter-spacing:0.136px;">Version 1.0</span>

<div id="sidebar"></div>
<div id="toggle"></div>
<svg class="abs" style="left:0;top:0" width="360" height="912" viewBox="0 0 360 912">
 <g fill="none" stroke="#8f9ab8" stroke-width="1.85" stroke-linecap="round" stroke-linejoin="round"><path d="M297.4,239.7H307.9M302.65,234.4V244.9"/><path d="M297.4,299.6H307.9M302.65,294.4V304.9"/><path d="M297.4,359.6H307.9M302.65,354.4V364.9"/><path d="M297.4,479.4H307.9M302.65,474.2V484.7"/><path d="M297.4,539.7H307.9M302.65,534.5V545.0"/><path d="M297.4,599.5H307.9M302.65,594.2V604.8"/><path d="M297.4,797.6H307.9M302.65,792.4V802.9"/><path d="M297.4,857.4H307.9M302.65,852.1V862.6"/></g>
 <g fill="none" stroke="#8b5cf6" stroke-width="1.55" stroke-linecap="round" stroke-linejoin="round">
<path d="M38,129.1H59.8"/>
<path d="M38.4,119.6V116.2a1.9,1.9 0 0 1 1.9,-1.9h0.8a1.9,1.9 0 0 1 1.9,1.9V123.9a1.9,1.9 0 0 1 -1.9,1.9h-0.8a1.9,1.9 0 0 1 -1.9,-1.9V122.7"/>
<rect x="46.3" y="109.7" width="4.8" height="16.1" rx="1.9"/>
<path d="M59.1,112.8V107.9a1.9,1.9 0 0 0 -1.9,-1.9h-0.9a1.9,1.9 0 0 0 -1.9,1.9V123.9a1.9,1.9 0 0 0 1.9,1.9h0.9a1.9,1.9 0 0 0 1.9,-1.9V116.2"/>
</g><g transform="translate(28,156)" fill="none" stroke="#8f9ab8" stroke-width="1.5" stroke-linecap="round" stroke-linejoin="round" ><circle cx="20.7" cy="14.8" r="4.5"/><path d="M29.9,29 A9.2,4.7 0 1 0 26.6,31.9"/></g><g transform="translate(28,218)" fill="none" stroke="#8f9ab8" stroke-width="1.5" stroke-linecap="round" stroke-linejoin="round" ><path d="M8.7,9.4C10.5,9.6 12.4,10.3 12.7,12.4L12.9,12.9V20.5C12.9,22.6 13.6,23.3 15.6,23.4L21,23.6"/>
<path d="M12.9,12.9H15.6"/><path d="M19.3,12.9H28.6C30.4,12.9 31.2,13.8 30.9,15.6L29.8,21C29.5,22.6 28.8,23.3 27.2,23.5L25.4,23.6"/>
<path d="M19.4,18.2L20.7,19.6L24.4,16.1"/><circle cx="15.5" cy="28.2" r="1.7"/><circle cx="26" cy="28.2" r="1.7"/></g><g transform="translate(28,278)" fill="none" stroke="#8f9ab8" stroke-width="1.5" stroke-linecap="round" stroke-linejoin="round" ><ellipse cx="20.9" cy="12.8" rx="9.1" ry="4.3"/>
<path d="M11.8,12.8V27C11.8,29.4 15.9,31.3 20.9,31.3C25.9,31.3 30,29.4 30,27V19.4"/>
<path d="M11.8,19.9C11.8,22.3 15.9,24.2 20.9,24.2C25.9,24.2 30,22.3 30,19.9"/></g><g transform="translate(28,338)" fill="none" stroke="#8f9ab8" stroke-width="1.5" stroke-linecap="round" stroke-linejoin="round" ><ellipse cx="20.9" cy="12.8" rx="9.1" ry="4.3"/>
<path d="M11.8,12.8V27C11.8,29.4 15.9,31.3 20.9,31.3C25.9,31.3 30,29.4 30,27V19.4"/>
<path d="M11.8,19.9C11.8,22.3 15.9,24.2 20.9,24.2C25.9,24.2 30,22.3 30,19.9"/></g><g transform="translate(28,397)" fill="none" stroke="#8f9ab8" stroke-width="1.5" stroke-linecap="round" stroke-linejoin="round" ><path d="M9.8,13.1L12.2,13.8C13.2,14.1 13.8,14.7 14.1,15.7L16.3,23.8"/>
<circle cx="16.1" cy="27.9" r="3.3"/><path d="M19.8,26.2L30.4,24.2"/>
<path opacity=".5" d="M19.3,12.3L26.3,10.5C27.6,10.2 28.4,10.6 28.7,11.9L30.5,18.7C30.8,20 30.4,20.8 29.1,21.1L22.1,22.9C20.8,23.2 20,22.8 19.7,21.5L17.9,14.7C17.6,13.4 18,12.6 19.3,12.3Z"/></g><g transform="translate(28,459)" fill="none" stroke="#8f9ab8" stroke-width="1.5" stroke-linecap="round" stroke-linejoin="round" ><circle cx="20.7" cy="11.8" r="4.3"/>
<path d="M26.5,21.6A6.6,4.6 0 1 1 22.4,19.9"/>
<path d="M13.9,9.3A3.3,3.1 0 0 0 13.9,15.4"/><path d="M27.3,9.3A3.3,3.1 0 0 1 27.3,15.4"/>
<path d="M11.7,20.5C9.5,21 8,22.2 8,23.7C8,25.2 9.5,26.5 11.7,27"/>
<path d="M29.5,20.5C31.8,21 33.4,22.2 33.4,23.7C33.4,25.2 31.8,26.5 29.5,27"/></g><g transform="translate(28,519)" fill="none" stroke="#8f9ab8" stroke-width="1.5" stroke-linecap="round" stroke-linejoin="round" ><circle cx="20.7" cy="11.8" r="4.3"/>
<path d="M26.5,21.6A6.6,4.6 0 1 1 22.4,19.9"/>
<path d="M13.9,9.3A3.3,3.1 0 0 0 13.9,15.4"/><path d="M27.3,9.3A3.3,3.1 0 0 1 27.3,15.4"/>
<path d="M11.7,20.5C9.5,21 8,22.2 8,23.7C8,25.2 9.5,26.5 11.7,27"/>
<path d="M29.5,20.5C31.8,21 33.4,22.2 33.4,23.7C33.4,25.2 31.8,26.5 29.5,27"/></g><g transform="translate(28,579)" fill="none" stroke="#8f9ab8" stroke-width="1.5" stroke-linecap="round" stroke-linejoin="round" ><path d="M32.1,14.5C31.9,11.6 31.4,9.9 30.4,9C28.8,7.4 26.1,7.4 20.7,7.4C15.3,7.4 12.6,7.4 11,9C9.3,10.7 9.3,13.3 9.3,18.7C9.3,24 9.3,26.7 11,28.3C12.6,29.9 15.3,29.9 20.7,29.9C26.1,29.9 28.8,29.9 30.4,28.3C32.1,26.7 32.1,24 32.1,18.2"/><path d="M15.1,14.9V25.6M20.7,11.6V25.6M26.3,19.6V25.6"/></g><g transform="translate(28,637)" fill="none" stroke="#8f9ab8" stroke-width="1.5" stroke-linecap="round" stroke-linejoin="round" ><path d="M14.4,32.1C11.5,32 10.3,31 9.8,28.5C9.5,26.8 9.5,24.5 9.5,22.9C9.5,20.5 9.5,18.6 10,17.2C10.7,15 12.2,14.2 15.5,14.2H25.7C28.8,14.2 30.2,15.3 30.6,17.6L31.2,19.3"/>
<path d="M18.1,32.1H25.7C28.9,32.1 30.4,31 30.8,28.3L31,26.7"/>
<path d="M14,13.5L19.3,10.6C20.1,10.2 20.8,10.2 21.6,10.6L25.9,13"/><path d="M17.5,13H23.1"/>
<path d="M13.6,18.4H18.7"/>
<path d="M32.4,21.3C32.4,20 31.8,19.4 30.5,19.4H27.4A3.6,3.6 0 0 0 27.4,26.6H30.5C31.8,26.6 32.4,26 32.4,24.6"/>
<circle cx="27.6" cy="22.9" r=".9" fill="#8f9ab8" stroke="none"/></g><g transform="translate(28,713.6)" fill="none" stroke="#8f9ab8" stroke-width="1.5" stroke-linecap="round" stroke-linejoin="round" ><circle cx="20.7" cy="14.8" r="4.5"/><path d="M29.9,29 A9.2,4.7 0 1 0 26.6,31.9"/></g><g transform="translate(28,777)" fill="none" stroke="#8f9ab8" stroke-width="1.5" stroke-linecap="round" stroke-linejoin="round" ><path d="M32.1,14.5C31.9,11.6 31.4,9.9 30.4,9C28.8,7.4 26.1,7.4 20.7,7.4C15.3,7.4 12.6,7.4 11,9C9.3,10.7 9.3,13.3 9.3,18.7C9.3,24 9.3,26.7 11,28.3C12.6,29.9 15.3,29.9 20.7,29.9C26.1,29.9 28.8,29.9 30.4,28.3C32.1,26.7 32.1,24 32.1,18.2"/><path d="M16,13H25.9" stroke-width="1.7"/><path d="M18,17H23.7" stroke-width="1.7"/>
<path d="M9.4,19.7H13.4C14.6,19.7 15.3,20.2 16,21.2L16.9,22.4C17.6,23.3 18.3,23.7 19.4,23.7H22.2C23.3,23.7 24,23.3 24.7,22.4L25.6,21.2C26.3,20.2 27,19.7 28.2,19.7H32"/></g><g transform="translate(28,837)" fill="none" stroke="#8f9ab8" stroke-width="1.5" stroke-linecap="round" stroke-linejoin="round" ><circle cx="20.7" cy="18.65" r="3.4"/><path d="M30.90,22.56 L30.87,22.86 L30.82,23.16 L30.75,23.44 L30.65,23.72 L30.54,23.99 L30.40,24.25 L30.24,24.50 L30.07,24.73 L29.88,24.96 L29.67,25.16 L29.44,25.35 L29.19,25.52 L28.92,25.67 L28.63,25.79 L28.29,25.85 L27.70,25.65 L27.13,25.42 L26.81,25.44 L26.54,25.49 L26.29,25.55 L26.05,25.62 L25.82,25.70 L25.61,25.79 L25.40,25.89 L25.20,25.99 L25.00,26.10 L24.81,26.21 L24.62,26.34 L24.43,26.47 L24.25,26.61 L24.06,26.77 L23.88,26.94 L23.70,27.12 L23.52,27.34 L23.35,27.60 L23.26,28.21 L23.14,28.83 L22.92,29.08 L22.67,29.28 L22.41,29.44 L22.14,29.57 L21.86,29.67 L21.57,29.75 L21.28,29.81 L20.99,29.84 L20.70,29.85 L20.41,29.84 L20.12,29.81 L19.83,29.75 L19.54,29.67 L19.26,29.57 L18.99,29.44 L18.73,29.28 L18.48,29.08 L18.26,28.83 L18.14,28.21 L18.05,27.60 L17.88,27.34 L17.70,27.12 L17.52,26.94 L17.34,26.77 L17.15,26.61 L16.97,26.47 L16.78,26.34 L16.59,26.21 L16.40,26.10 L16.20,25.99 L16.00,25.89 L15.79,25.79 L15.58,25.70 L15.35,25.62 L15.11,25.55 L14.86,25.49 L14.59,25.44 L14.27,25.42 L13.70,25.65 L13.11,25.85 L12.77,25.79 L12.48,25.67 L12.21,25.52 L11.96,25.35 L11.73,25.16 L11.52,24.96 L11.33,24.73 L11.16,24.50 L11.00,24.25 L10.86,23.99 L10.75,23.72 L10.65,23.44 L10.58,23.16 L10.53,22.86 L10.50,22.56 L10.51,22.26 L10.56,21.95 L10.67,21.62 L11.14,21.21M12.08,18.20 L12.06,17.97 L12.03,17.74 L11.99,17.50 L11.93,17.26 L11.86,17.01 L11.77,16.75 L11.62,16.47 L11.14,16.09 L10.67,15.68 L10.56,15.35 L10.51,15.04 L10.50,14.74 L10.53,14.44 L10.58,14.14 L10.65,13.86 L10.75,13.58 L10.86,13.31 L11.00,13.05 L11.16,12.80 L11.33,12.57 L11.52,12.34 L11.73,12.14 L11.96,11.95 L12.21,11.78 L12.48,11.63 L12.77,11.51 L13.11,11.45 L13.70,11.65 L14.27,11.88 L14.59,11.86 L14.86,11.81 L15.11,11.75 L15.35,11.68 L15.58,11.60 L15.79,11.51 L16.00,11.41 L16.20,11.31 L16.40,11.20 L16.59,11.09 L16.78,10.96 L16.97,10.83 L17.15,10.69 L17.34,10.53 L17.52,10.36 L17.70,10.18 L17.88,9.96 L18.05,9.70 L18.14,9.09 L18.26,8.47 L18.48,8.22 L18.73,8.02 L18.99,7.86 L19.26,7.73 L19.54,7.63 L19.83,7.55 L20.12,7.49 L20.41,7.46 L20.70,7.45 L20.99,7.46 L21.28,7.49 L21.57,7.55 L21.86,7.63 L22.14,7.73 L22.41,7.86 L22.67,8.02 L22.92,8.22 L23.14,8.47 L23.26,9.09 L23.35,9.70 L23.52,9.96 L23.70,10.18 L23.88,10.36 L24.06,10.53 L24.25,10.69 L24.43,10.83 L24.62,10.96 L24.81,11.09 L25.00,11.20 L25.20,11.31 L25.40,11.41 L25.61,11.51 L25.82,11.60 L26.05,11.68 L26.29,11.75 L26.54,11.81 L26.81,11.86 L27.13,11.88 L27.70,11.65 L28.29,11.45 L28.63,11.51 L28.92,11.63 L29.19,11.78 L29.44,11.95 L29.67,12.14 L29.88,12.34 L30.07,12.57 L30.24,12.80 L30.40,13.05 L30.54,13.31 L30.65,13.58 L30.75,13.86 L30.82,14.14 L30.87,14.44 L30.90,14.74 L30.89,15.04 L30.84,15.35 L30.73,15.68 L30.26,16.09 L29.78,16.47 L29.63,16.75 L29.54,17.01 L29.47,17.26 L29.41,17.50 L29.37,17.74 L29.34,17.97 L29.32,18.20 L29.30,18.42 L29.30,18.65 L29.30,18.88 L29.32,19.10 L29.34,19.33 L29.37,19.56"/></g>
 <g fill="none" stroke="#8d98b8" stroke-width="1.85" stroke-linecap="round" stroke-linejoin="round">
<path d="M328.9,34.8A12.8,12.8 0 1 1 323.9,40.2"/><path d="M337.4,41.6L333.5,45.5L337.4,49.4"/></g>
 <g transform="translate(90,5) scale(0.083333)" fill="#0e8a8e">
<path d="M690,145 L985,145 L1122,478 L1172,492 L1003,492 L878,190 L870,180 L818,214 L706,220 C678,222 662,236 662,255 C662,274 676,290 702,290 L772,290 C812,292 850,310 870,350 C890,390 890,430 868,468 L850,420 L830,442 L800,492 L640,492 L690,485 L745,375 C640,360 580,320 580,250 C580,190 620,145 690,145 Z"/></g>
</svg>
<span class="t n" style="left:103.90px;top:50.00px;font-size:12.8px;color:#111;transform:scaleX(0.7528);transform-origin:0 0;-webkit-text-stroke:.3px #111;">SA</span><span class="t n" style="left:121.00px;top:50.00px;font-size:12.8px;color:#111;transform:scaleX(0.8193);transform-origin:0 0;-webkit-text-stroke:.3px #111;">ACCESSORIES</span><span class="t n" style="left:199.66px;top:50.00px;font-size:12.8px;color:#111;transform:scaleX(0.8404);transform-origin:0 0;-webkit-text-stroke:.3px #111;">LTD.</span>
<span class="t n" style="left:78.40px;top:108.00px;font-size:19.7px;color:#8b5cf6;letter-spacing:0.467px;">Dashboard</span><span class="t n" style="left:79.40px;top:168.01px;font-size:19.7px;color:#2a3350;letter-spacing:0.291px;">Order Management</span><span class="t n" style="left:78.40px;top:230.01px;font-size:19.7px;color:#2a3350;letter-spacing:0.186px;">Purchase &amp; Requisition</span><span class="t n" style="left:79.40px;top:290.01px;font-size:19.7px;color:#2a3350;letter-spacing:0.210px;">Stock Management</span><span class="t n" style="left:78.40px;top:350.01px;font-size:19.7px;color:#2a3350;letter-spacing:0.309px;">Factory Management</span><span class="t n" style="left:78.40px;top:408.00px;font-size:19.7px;color:#2a3350;letter-spacing:0.449px;">Delivery Management</span><span class="t n" style="left:79.40px;top:470.01px;font-size:19.7px;color:#2a3350;letter-spacing:0.312px;">Vendor Management</span><span class="t n" style="left:78.40px;top:530.01px;font-size:19.7px;color:#2a3350;letter-spacing:0.288px;">HR Management</span><span class="t n" style="left:78.40px;top:590.00px;font-size:19.7px;color:#2a3350;letter-spacing:0.278px;">Loan Management</span><span class="t n" style="left:78.40px;top:648.01px;font-size:19.7px;color:#2a3350;letter-spacing:-0.131px;">Expenses</span><span class="t n" style="left:78.40px;top:725.01px;font-size:19.7px;color:#2a3350;letter-spacing:0.108px;">Machandisers</span><span class="t n" style="left:78.40px;top:788.01px;font-size:19.7px;color:#2a3350;letter-spacing:0.291px;">Components</span><span class="t n" style="left:79.40px;top:848.01px;font-size:19.7px;color:#2a3350;letter-spacing:0.301px;">Settings</span>

</div>
</body></html>
